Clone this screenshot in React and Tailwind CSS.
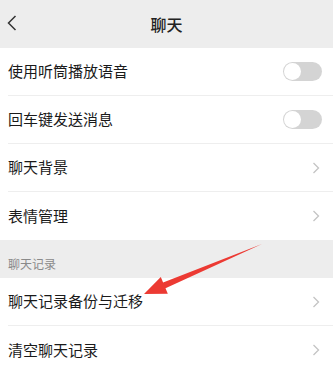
function Toggle() {
  return (
    <div className="w-[39px] h-[19px] rounded-full bg-[#d4d4d4] flex items-center p-[1px]">
      <div className="w-[17px] h-[17px] rounded-full bg-white" />
    </div>
  );
}

function Row({ label, right, divider = true }) {
  return (
    <div className="bg-white pl-2">
      <div
        className={`h-[48px] flex items-center justify-between ${
          divider ? "border-b border-[#eeeeee]" : ""
        } ${right === Arrow ? "pr-[13px]" : "pr-[11px]"}`}
      >
        <span className="text-[15px] text-[#1a1a1a]">{label}</span>
        {right}
      </div>
    </div>
  );
}

const Arrow = (
  <svg width="8" height="12" viewBox="0 0 8 12" className="shrink-0">
    <polyline points="1.5,1 6.5,6 1.5,11" fill="none" stroke="#c4c4c4" strokeWidth="1.3" />
  </svg>
);

export default function App() {
  return (
    <div
      className="relative w-[333px] h-[374px] overflow-hidden bg-[#ededed]"
      style={{ fontFamily: '"Noto Sans CJK SC", "Noto Sans", sans-serif' }}
    >
      {/* header */}
      <div className="h-[48px] relative flex items-center justify-center">
        <svg width="10" height="16" viewBox="0 0 10 16" className="absolute left-[7px] top-[15px]">
          <polyline points="8.5,1 1.5,8 8.5,15" fill="none" stroke="#333" strokeWidth="1.5" />
        </svg>
        <span className="text-[16px] font-medium text-[#222]">聊天</span>
      </div>

      <Row label="使用听筒播放语音" right={<Toggle />} />
      <Row label="回车键发送消息" right={<Toggle />} />
      <Row label="聊天背景" right={Arrow} />
      <Row label="表情管理" right={Arrow} divider={false} />

      <div className="h-[38px] flex items-center pl-2 pt-[9px]">
        <span className="text-[12px] text-[#8a8a8a]">聊天记录</span>
      </div>

      <Row label="聊天记录备份与迁移" right={Arrow} />
      <Row label="清空聊天记录" right={Arrow} divider={false} />

      {/* red annotation arrow */}
      <svg className="absolute left-0 top-0 pointer-events-none" width="333" height="374">
        <polygon
          points="144,294 160.8,277.1 163.1,282.6 262,244 165.5,288.2 167.8,293.7"
          fill="#ec3a33"
        />
      </svg>
    </div>
  );
}
